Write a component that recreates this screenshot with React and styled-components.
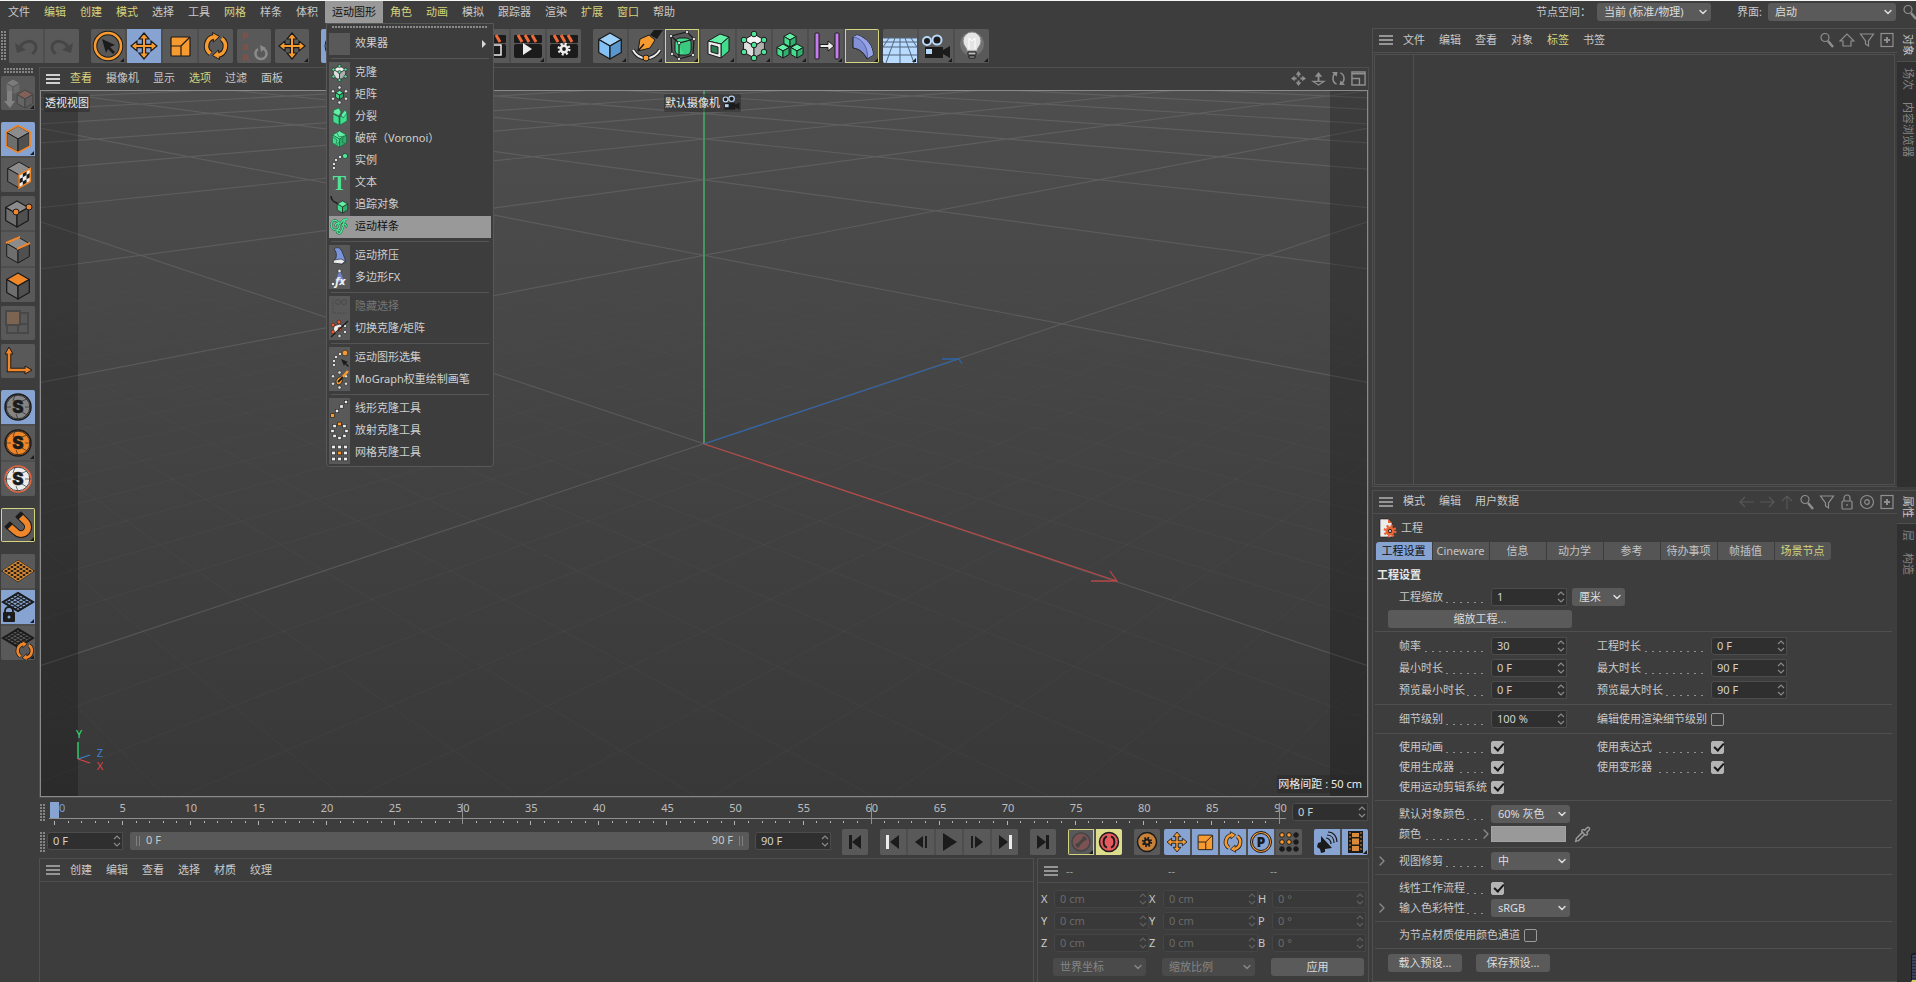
import React from 'react';
import styled, { createGlobalStyle, css } from 'styled-components';
import { ChevronDown, ChevronRight, Pipette } from 'lucide-react';

const c = {
  bg: '#3d3d3d',
  line: '#4f4f4f',
  button: '#595959',
  dark: '#1b1b1b',
  field: '#2f2f2f',
  text: '#c9c9c9',
  blue: '#86a3d2',
  yellow: '#d4d47e',
  orange: '#f79a2f',
  green: '#4ee598',
  white: '#ececec',
};

const GlobalStyle = createGlobalStyle`
  * {
    box-sizing: border-box;
  }
  body {
    margin: 0;
    background: ${c.bg};
    overflow: hidden;
  }
  body, button, input, select {
    font-family: 'Noto Sans', 'Noto Sans CJK SC', sans-serif;
    font-size: 11px;
    line-height: 16px;
    color: ${c.text};
  }
  button, input, select {
    margin: 0;
    padding: 0;
    border: 0;
    outline: 0;
    background: none;
  }
  svg {
    display: block;
    flex: none;
  }
`;

/* ---------- shell ---------- */

const Shell = styled.div`
  display: flex;
  flex-direction: column;
  height: 100vh;
  border-top: 1px solid #f4f7f4;
`;

const Main = styled.div`
  display: flex;
  flex: 1;
  min-height: 0;
`;

const Workspace = styled.div`
  display: flex;
  flex-direction: column;
  flex: 1;
  min-width: 0;
  padding-right: 3px;
`;

const WorkBody = styled.div`
  display: flex;
  flex: 1;
  min-height: 0;
`;

const Center = styled.div`
  display: flex;
  flex-direction: column;
  flex: 1;
  min-width: 0;
`;

const Sidebar = styled.aside`
  display: flex;
  flex-direction: column;
  width: 544px;
  padding-top: 5px;
`;

/* ---------- menus ---------- */

const MenuBar = styled.nav`
  display: flex;
  align-items: center;
  height: 22px;
  padding-left: 1px;
  flex: none;
`;

const MenuSlot = styled.div`
  position: relative;
`;

const MenuItem = styled.button`
  display: block;
  height: 22px;
  padding: 0 7px 1px;
  white-space: nowrap;
  color: ${p => (p.$open ? '#101010' : p.$hot ? c.yellow : c.text)};
  background: ${p => (p.$open ? '#999' : 'none')};
`;

const Spacer = styled.div`
  flex: 1;
`;

const BarLabel = styled.label`
  margin-left: ${p => p.$gap || 0}px;
  white-space: nowrap;
`;

const Popup = styled.div`
  position: absolute;
  z-index: 10;
  top: 22px;
  left: 1px;
  width: 168px;
  padding: 2px;
  background: ${c.bg};
  border: 1px solid #585858;
  border-radius: 0 0 4px 4px;
`;

const PopupGrip = styled.div`
  height: 4px;
  margin: 0 3px 3px;
  background: radial-gradient(circle at 1px 1px, #8a8a8a 0 1px, transparent 1px) 0 0 / 3px 4px;
`;

const PopupItem = styled.button`
  display: flex;
  align-items: center;
  width: 100%;
  height: 22px;
  text-align: left;
  white-space: nowrap;
  color: ${p => (p.$off ? '#757575' : p.$active ? '#101010' : '#d0d0d0')};
  background: ${p => (p.$active ? '#999' : 'none')};
`;

const PopupText = styled.span`
  flex: 1;
  padding: 0 5px 2px;
`;

const PopupIcon = styled.span`
  width: 21px;
  height: 22px;
  background: ${p => (p.$active ? 'none' : c.button)};
`;

const PopupRule = styled.hr`
  height: 1px;
  margin: 3px 2px;
  border: 0;
  background: #555;
`;

/* ---------- tools ---------- */

const ToolStrip = styled.div`
  display: flex;
  height: 44px;
  padding: 6px 0 0 1px;
  flex: none;
`;

const ToolColumn = styled.div`
  width: 39px;
  padding: 1px 0 0 1px;
  flex: none;
`;

const Grip = styled.div`
  flex: none;
  background: radial-gradient(circle at 1px 1px, #858585 0 1px, transparent 1px) 0 0 / 3px 3px;
  width: ${p => p.$w}px;
  height: ${p => p.$h}px;
  margin: ${p => p.$m || 0};
`;

const Group = styled.div`
  display: flex;
  flex: none;
  flex-direction: ${p => (p.$column ? 'column' : 'row')};
  gap: 2px;
  width: ${p => (p.$column ? '34px' : 'auto')};
  height: ${p => (p.$column ? 'auto' : 'max-content')};
  margin: ${p => (p.$column ? `${p.$gap}px 0 0` : `0 0 0 ${p.$gap}px`)};
  border-radius: 2px;
  background: #4e4e4e;
  overflow: hidden;
`;

const Tool = styled.button`
  position: relative;
  width: ${p => (p.$small ? 26 : 34)}px;
  height: ${p => (p.$small ? 26 : 34)}px;
  background: ${p => (p.$on ? c.blue : p.$record ? '#dcdc8c' : c.button)};
  ${p =>
    p.$ring &&
    css`
      box-shadow: inset 0 0 0 1px ${c.yellow};
    `}
  ${p =>
    p.$more &&
    css`
      &::after {
        content: '';
        position: absolute;
        right: 1px;
        bottom: 1px;
        border: 2px solid ${c.dark};
        border-top-color: transparent;
        border-left-color: transparent;
      }
    `}
`;

/* ---------- viewport ---------- */

const Panel = styled.section`
  display: flex;
  flex-direction: column;
  border: 1px solid ${c.line};
  min-height: 0;
`;

const ViewPanel = styled(Panel)`
  flex: 1;
`;

const PanelBar = styled.div`
  display: flex;
  align-items: center;
  height: ${p => p.$h || 22}px;
  padding: 0 ${p => p.$right || 0}px ${p => p.$lift || 0}px 6px;
  flex: none;
  border-bottom: ${p => (p.$line ? `1px solid ${c.line}` : 0)};
`;

const BurgerButton = styled.button`
  width: 14px;
  height: 10px;
  margin-right: 3px;
  flex: none;
  background: linear-gradient(
    ${p => p.$color || '#959595'} 2px,
    transparent 2px 4px,
    ${p => p.$color || '#959595'} 4px 6px,
    transparent 6px 8px,
    ${p => p.$color || '#959595'} 8px
  );
`;

const BarIcons = styled.div`
  display: flex;
  align-items: center;
  gap: ${p => p.$gap}px;
`;

const Scene = styled.div`
  position: relative;
  flex: 1;
  min-height: 0;
  border: 1px solid #8a8a8a;
  background: linear-gradient(#4e4e4e, #383838);
  overflow: hidden;
  > svg {
    width: 100%;
    height: 100%;
  }
`;

const SceneTag = styled.div`
  position: absolute;
  display: flex;
  align-items: center;
  height: 18px;
  padding: 0 1px;
  border-radius: 2px;
  color: #ececec;
  white-space: nowrap;
  background: rgba(40, 40, 40, 0.5);
`;

const TagLeft = styled(SceneTag)`
  top: 3px;
  left: 3px;
`;

const TagCamera = styled(SceneTag)`
  top: 3px;
  left: 50%;
  margin-left: -40px;
  gap: 2px;
`;

const TagGrid = styled(SceneTag)`
  right: 4px;
  bottom: 3px;
`;

/* ---------- timeline ---------- */

const TimeRow = styled.div`
  display: flex;
  height: ${p => p.$h}px;
  padding: 0 1px;
  flex: none;
`;

const Ruler = styled.div`
  position: relative;
  flex: 1;
  margin: 0 6px 0 4px;
  padding-top: 2px;
`;

const RulerLabels = styled.div`
  display: flex;
  justify-content: space-between;
  height: 19px;
  padding: 0 5px;
  border-bottom: 1px solid #8f8f8f;
  span {
    display: flex;
    justify-content: center;
    width: 1px;
    color: #bdbdbd;
  }
  span:first-child {
    justify-content: flex-start;
    text-indent: 5px;
    color: #7d9fdc;
  }
`;

const RulerTicks = styled.div`
  display: flex;
  justify-content: space-between;
  padding: 2px 5px 0;
`;

const Tick = styled.i`
  width: 1px;
  height: ${p => (p.$tall ? 21 : p.$mid ? 4 : 2)}px;
  margin-top: ${p => (p.$tall ? -18 : 0)}px;
  background: ${p => (p.$tall ? '#8f8f8f' : '#b5b5b5')};
`;

const Playhead = styled.i`
  position: absolute;
  top: 4px;
  left: 1px;
  width: 9px;
  height: 16px;
  background: ${c.blue};
`;

const RangeBar = styled.div`
  display: flex;
  flex: 1;
  justify-content: space-between;
  height: 18px;
  margin: 6px 6px 0 7px;
  padding: 0 6px;
  border-radius: 2px;
  background: #595959;
  span {
    height: 10px;
    margin-top: 4px;
    padding: 0 9px;
    line-height: 8px;
  }
  span:first-child {
    border-left: 1px solid #808080;
    box-shadow: inset 2px 0 #595959, inset 3px 0 #808080;
  }
  span:last-child {
    border-right: 1px solid #808080;
    box-shadow: inset -2px 0 #595959, inset -3px 0 #808080;
  }
`;

const Transport = styled.div`
  display: flex;
  margin: 3px 0 0 -1px;
`;

/* ---------- form parts ---------- */

const FieldBox = styled.span`
  position: relative;
  display: flex;
  width: ${p => (p.$w ? `${p.$w}px` : 'auto')};
  flex: ${p => (p.$w ? 'none' : 1)};
  min-width: 0;
  height: 18px;
  margin: ${p => p.$m || 0};
  border: 1px solid ${p => (p.$off ? '#454545' : '#4c4c4c')};
  border-radius: 3px 0 0 3px;
  background: ${p => (p.$off ? '#393939' : c.field)};
  input {
    width: 100%;
    padding: 0 14px 1px 5px;
    color: ${p => (p.$off ? '#6a6a6a' : '#d2d2d2')};
  }
`;

const Spin = styled.svg`
  position: absolute;
  top: 2px;
  right: 1px;
  fill: none;
  stroke: ${p => (p.$off ? '#606060' : '#8a8a8a')};
`;

const SelectBox = styled.span`
  position: relative;
  display: flex;
  width: ${p => (p.$w ? `${p.$w}px` : 'auto')};
  flex: ${p => (p.$w ? 'none' : 1)};
  min-width: 0;
  height: 18px;
  margin-left: ${p => p.$gap || 0}px;
  border-radius: 3px;
  background: ${p => (p.$off ? '#4a4a4a' : '#5a5a5a')};
  color: ${p => (p.$off ? '#858585' : '#dcdcdc')};
  select {
    appearance: none;
    width: 100%;
    padding: 0 14px 1px 7px;
    color: inherit;
    opacity: 1;
  }
  svg {
    position: absolute;
    top: 3px;
    right: 2px;
    pointer-events: none;
  }
`;

const PushButton = styled.button`
  width: ${p => (p.$w ? `${p.$w}px` : 'auto')};
  flex: ${p => (p.$w ? 'none' : 1)};
  height: 18px;
  padding-bottom: 1px;
  border-radius: 3px;
  background: #5a5a5a;
  color: #dcdcdc;
`;

const Check = styled.input.attrs({ type: 'checkbox' })`
  appearance: none;
  position: relative;
  width: 13px;
  height: 13px;
  flex: none;
  border: 1px solid #9a9a9a;
  border-radius: 2px;
  &:checked {
    background: #b4b4b4;
    border-color: #b4b4b4;
  }
  &:checked::after {
    content: '';
    position: absolute;
    top: 1px;
    left: 2px;
    width: 8px;
    height: 4px;
    border: solid #161616;
    border-width: 0 0 2px 2px;
    transform: rotate(-48deg);
  }
`;

/* ---------- bottom panels ---------- */

const BottomRow = styled.div`
  display: flex;
  gap: 3px;
  height: 124px;
  flex: none;
`;

const Materials = styled(Panel)`
  flex: 1;
  border-bottom: 0;
`;

const Coords = styled(Panel)`
  width: 332px;
  border-bottom: 0;
`;

const CoordHeads = styled.div`
  display: grid;
  grid-template-columns: repeat(3, 102px);
  color: #9a9a9a;
  padding-left: 5px;
`;

const CoordGrid = styled.div`
  display: grid;
  grid-template-columns: 13px 95px 14px 95px 14px 94px;
  grid-auto-rows: 22px;
  align-items: center;
  padding: 5px 0 0 3px;
`;

const CoordFoot = styled.div`
  display: grid;
  grid-template-columns: 93px 93px 93px;
  gap: 16px;
  padding: 4px 0 0 15px;
`;

/* ---------- right side ---------- */

const Dock = styled.div`
  display: flex;
  min-height: 0;
  flex: ${p => (p.$grow ? 1 : 'none')};
  height: ${p => (p.$h ? `${p.$h}px` : 'auto')};
`;

const DockGap = styled.div`
  height: 3px;
`;

const DockPanel = styled(Panel)`
  flex: 1;
  border-right: 0;
`;

const DockTabs = styled.div`
  display: flex;
  flex-direction: column;
  width: 19px;
  background: #303030;
`;

const DockTab = styled.button`
  padding: ${p => (p.$on ? '5px 0 5px 3px' : '6px 0 6px 3px')};
  writing-mode: vertical-rl;
  text-orientation: sideways;
  text-align: left;
  line-height: 16px;
  color: ${p => (p.$on ? '#c4c4c4' : '#858585')};
  background: ${p => (p.$on ? c.bg : 'none')};
  border-top: ${p => (p.$on ? `1px solid ${c.line}` : 0)};
  border-bottom: ${p => (p.$on ? `1px solid ${c.line}` : 0)};
`;

const ObjectArea = styled.div`
  flex: 1;
  margin: 1px 2px 1px 1px;
  border: 1px solid ${c.line};
  background: linear-gradient(${c.line}, ${c.line}) 38px 0 / 1px 100% no-repeat;
`;

const ObjectTitle = styled.div`
  display: flex;
  align-items: center;
  gap: 4px;
  height: 28px;
  padding: 0 0 1px 6px;
`;

const TabRow = styled.div`
  display: flex;
  gap: 1px;
  margin-left: 3px;
`;

const Tab = styled.button`
  width: 56px;
  height: 18px;
  padding: 0 1px 1px 0;
  white-space: nowrap;
  background: ${p => (p.$on ? c.blue : '#555')};
  color: ${p => (p.$on ? '#101010' : p.$hot ? c.yellow : '#c4c4c4')};
  &:first-child {
    border-radius: 3px 0 0 0;
  }
  &:last-child {
    border-radius: 0 3px 3px 0;
  }
`;

const SectionTitle = styled.h2`
  height: 22px;
  margin: 4px 0 0 4px;
  font-size: 11px;
  font-weight: 700;
  line-height: 21px;
  color: #e6e6e6;
`;

const Section = styled.div`
  margin: 0 5px 0 2px;
  padding: ${p => (p.$flush ? '0 0 1px' : '3px 0')};
  border-top: ${p => (p.$flush ? 0 : `1px solid ${c.line}`)};
`;

const Row = styled.div`
  display: flex;
  align-items: center;
  height: ${p => p.$h || 20}px;
  padding-left: ${p => (p.$outer ? 13 : 24)}px;
`;

const Fold = styled(ChevronRight).attrs({ size: 16, strokeWidth: 2 })`
  margin: 0 ${p => (p.$inner ? -3 : 9)}px 0 ${p => (p.$inner ? -7 : -25)}px;
  color: #8a8a8a;
`;

const Pair = styled.div`
  display: flex;
  align-items: center;
  width: 198px;
`;

const Caption = styled.label`
  display: flex;
  width: ${p => p.$w || 84}px;
  margin-right: 8px;
  white-space: nowrap;
  flex: none;
  &::after {
    content: '';
    flex: 1;
    margin-left: 2px;
    height: 14px;
    background: repeating-linear-gradient(to left, #909090 0 2px, transparent 2px 7px) right bottom / 100% 1px no-repeat;
  }
`;

const PlainCaption = styled.label`
  margin-right: 4px;
  white-space: nowrap;
`;

const Swatch = styled.button`
  width: 75px;
  height: 16px;
  background: #999;
  border: 1px solid #a3a3a3;
`;

const TwoButtons = styled.div`
  display: flex;
  gap: 14px;
  padding: 2px 0 0 13px;
`;

const Gadget = styled.i`
  position: fixed;
  right: 0;
  bottom: 0;
  width: 5px;
  height: 29px;
  border: 1px solid #15171f;
  border-right: 0;
  border-radius: 3px 0 0 0;
  background: repeating-linear-gradient(#262b3d 0 1px, #3b425a 1px 3px);
  border-bottom: 2px solid #d8d060;
`;

/* ---------- drawings ---------- */

const greens = ['#63efa6', '#41dd8d', '#2fae6c'];
const greys = ['#8c8c8c', '#6e6e6e', '#505050'];
const whites = ['#f4f4f4', '#dedede', '#b0b0b0'];

function Cube({ x, y, r, fill = greens, line = c.dark, w = 1 }) {
  const k = r * 0.87;
  const h = r / 2;
  return (
    <g stroke={line} strokeWidth={w} strokeLinejoin="round">
      <path d={`M${x} ${y - r}l${k} ${h}l${-k} ${h}l${-k} ${-h}z`} fill={fill[0]} />
      <path d={`M${x - k} ${y - h}l${k} ${h}v${r}l${-k} ${-h}z`} fill={fill[1]} />
      <path d={`M${x + k} ${y - h}l${-k} ${h}v${r}l${k} ${-h}z`} fill={fill[2]} />
    </g>
  );
}

function Dots({ at, r = 2, fill = c.green, line = c.dark, w = 1 }) {
  return at.map(([x, y], i) => <circle key={i} cx={x} cy={y} r={r} fill={fill} stroke={line} strokeWidth={w} />);
}

function Squares({ at, s = 3, fill = c.white }) {
  return at.map(([x, y], i) => (
    <rect key={i} x={x - s / 2} y={y - s / 2} width={s} height={s} fill={fill} stroke={c.dark} strokeWidth=".6" />
  ));
}

function ring(cx, cy, r, n = 6, from = -90) {
  return Array.from({ length: n }, (_, i) => {
    const a = ((from + (i * 360) / n) * Math.PI) / 180;
    return [cx + r * Math.cos(a), cy + r * Math.sin(a)];
  });
}

function Gear({ x, y, r, color = c.white, hole = c.dark }) {
  const round = 2 * Math.PI * r;
  return (
    <g fill="none">
      <circle cx={x} cy={y} r={r} stroke={color} strokeWidth={r * 0.6} strokeDasharray={`${round / 16} ${round / 16}`} />
      <circle cx={x} cy={y} r={r * 0.9} fill={color} />
      <circle cx={x} cy={y} r={r * 0.38} fill={hole} />
    </g>
  );
}

const moveD = 'M17 4l5 6h-3.400v5.400H24V12l6 5-6 5v-3.400h-5.400V24H22l-5 6-5-6h3.400v-5.400H10V22l-6-5 6-5v3.400h5.400V10H12z';

const Move = () => <path d={moveD} fill={c.orange} stroke={c.dark} strokeWidth="1.200" />;

const Scale = () => (
  <g stroke={c.dark} strokeWidth="1.200">
    <rect x="8" y="8" width="19" height="19" rx="1" fill={c.orange} />
    <path d="M8 17h10v10M18 17l9-9" fill="none" />
  </g>
);

const Rotate = ({ color = c.orange }) => (
  <g fill="none" strokeLinecap="butt">
    <path d="M11.500 24.500A9.300 9.300 0 0 1 15 7.800M22.500 9.500A9.300 9.300 0 0 1 19 26.200" stroke={c.dark} strokeWidth="5.500" />
    <path d="M13.500 3.500l7 4-6 5.500zM20.500 30.500l-7-4 6-5.500z" fill={color} stroke={c.dark} />
    <path d="M11.500 24.500A9.300 9.300 0 0 1 15 7.800M22.500 9.500A9.300 9.300 0 0 1 19 26.200" stroke={color} strokeWidth="3.500" />
  </g>
);

const Undo = ({ flip }) => (
  <g transform={flip ? 'matrix(-1 0 0 1 34 0)' : undefined}>
    <path d="M11 21c-1-9 16-13 16-2 0 3-2 4-3.500 6" fill="none" stroke="#464646" strokeWidth="3" />
    <path d="M6 14l2 10 9-3z" fill="#464646" />
  </g>
);

const Clapper = ({ children }) => (
  <g>
    <rect x="3" y="15" width="28" height="14" rx="2" fill={c.dark} />
    <rect x="3" y="6" width="28" height="8" rx="1" fill={c.dark} />
    <path d="M7 6l4 7M14 6l4 7M21 6l4 7" stroke="#ee6a3a" strokeWidth="3" />
    {children}
  </g>
);

const Camera = () => (
  <g>
    <path d="M6 18h18v11H6zM24 21l7-4v12l-7-4z" fill={c.dark} />
    <circle cx="8" cy="12" r="4" fill={c.dark} stroke="#b9d7f7" strokeWidth="2" />
    <circle cx="18" cy="11" r="4.500" fill={c.dark} stroke="#b9d7f7" strokeWidth="2" />
    <rect x="7" y="20" width="6" height="5" fill="#b9d7f7" />
  </g>
);

const Net = ({ y = 17, color = '#d98a34', h = 10, under = c.dark }) => (
  <g fill="none" stroke={color}>
    <path d={`M2 ${y}L17 ${y - h}L32 ${y}L17 ${y + h}z`} stroke={c.dark} strokeWidth="2" fill={under} />
    {[0, 1, 2, 3, 4, 5].map(i => (
      <path
        key={i}
        strokeWidth="1.100"
        d={`M${2 + i * 3} ${y - i * (h / 5)}l15 ${h}M${2 + i * 3} ${y + i * (h / 5)}l15 ${-h}`}
      />
    ))}
  </g>
);

const Snap = ({ fill, edge = c.dark }) => (
  <g>
    <circle cx="17" cy="17" r="13" fill={fill} stroke={edge} strokeWidth="1.500" />
    <path d="M4 17h6M24 17h6M14 5l-2 6M17 29l-2-5M26 9l-5 2M26 25l-5-3" stroke={c.dark} strokeWidth=".6" />
    <circle cx="17" cy="17" r="11.800" fill="none" stroke={c.dark} strokeWidth=".8" />
    <text x="17" y="23" textAnchor="middle" fontFamily="Inter" fontSize="17" fontWeight="900" fill={c.dark} stroke={c.dark} strokeWidth=".4">S</text>
  </g>
);

const art = {
  undo: <Undo />,
  redo: <Undo flip />,
  select: (
    <g>
      <circle cx="17" cy="17" r="13" fill="none" stroke={c.dark} strokeWidth="4.500" />
      <circle cx="17" cy="17" r="13" fill="none" stroke={c.orange} strokeWidth="2.600" />
      <path d="M11 10l13 6-5 2 5 5-2 2-5-5-2 4z" fill={c.dark} />
    </g>
  ),
  move: <Move />,
  scale: <Scale />,
  rotate: <Rotate />,
  psr: (
    <g>
      <g fill="#7f5148" stroke="#7f5148" strokeWidth=".6" fontFamily="Liberation Sans" fontSize="9" fontWeight="700">
        <text x="5" y="10">P</text>
        <text x="5" y="21">S</text>
        <text x="5" y="32">R</text>
      </g>
      <path d="M21 20a5.500 5.500 0 1 0 6 0" fill="none" stroke="#8a8a8a" strokeWidth="2.500" />
      <path d="M23 16l6 3-5 4z" fill="#8a8a8a" />
    </g>
  ),
  axisX: <circle cx="17" cy="17" r="13" fill={c.orange} stroke={c.dark} />,
  world: <Cube x={17} y={17} r={12} fill={greys} />,
  clap: (
    <Clapper>
      <rect x="10" y="16" width="16" height="10" fill="none" stroke={c.white} strokeWidth="1.500" />
    </Clapper>
  ),
  clapPlay: (
    <Clapper>
      <path d="M12 14v12l9-6z" fill={c.white} />
    </Clapper>
  ),
  clapGear: (
    <Clapper>
      <Gear x={17} y={20} r={5} />
    </Clapper>
  ),
  cube: <Cube x={17} y={17} r={13} fill={['#9fd2fb', '#83c0f5', '#5b97cf']} w={1.3} />,
  pen: (
    <g>
      <path d="M21 6l4-5h9l-6 9z" fill={c.dark} />
      <path d="M9 22l2-12 9-4 6 5-5 8z" fill={c.orange} stroke={c.dark} />
      <path d="M9 22l6-7" stroke={c.dark} strokeWidth="1.500" />
      <path d="M4 21c6 11 20 11 27 0" fill="none" stroke={c.dark} strokeWidth="4" />
      <path d="M4 21c6 11 20 11 27 0" fill="none" stroke={c.white} strokeWidth="2" />
      <Dots at={[[17, 29]]} r={3} fill={c.orange} />
    </g>
  ),
  subdiv: (
    <g>
      <rect x="10" y="9" width="16" height="17" rx="5" fill={greens[1]} stroke={c.dark} />
      <path d="M12 14l9-2 5 1-1 10-5 3z" fill={greens[2]} opacity=".4" />
      <path d="M6 7l16-4 7 7-15 4zM6 7l1 18 7 5V14M29 10l-1 16-14 4" fill="none" stroke={c.dark} strokeWidth="1.200" />
      <Squares at={[[6, 7], [22, 3], [29, 10], [14, 14], [7, 25], [14, 30], [28, 26]]} s={2.5} />
    </g>
  ),
  extrude: (
    <g stroke={c.dark} strokeLinejoin="round">
      <path d="M7 12l12-7 9 3-8 7z" fill={greens[0]} />
      <path d="M28 8v14l-8 7V15z" fill={greens[1]} />
      <path d="M7 12l13 3v14L7 25z" fill={c.white} />
      <path d="M10 16l7 2v7l-7-2z" fill="#2a8052" />
    </g>
  ),
  cloner: (
    <g>
      <Cube x={17} y={17} r={12} fill={whites} />
      <Dots at={[[17, 5], [27, 11], [27, 23], [17, 29], [7, 23], [7, 11], [17, 16]]} r={2.8} />
    </g>
  ),
  fracture: (
    <g>
      <Cube x={17} y={11} r={7} />
      <Cube x={10} y={22} r={7} />
      <Cube x={24} y={22} r={7} />
    </g>
  ),
  spread: (
    <g>
      <rect x="6" y="4" width="4" height="26" rx="1" fill="#c77df0" stroke={c.dark} />
      <rect x="26" y="4" width="4" height="26" rx="1" fill="#c77df0" stroke={c.dark} />
      <path d="M11 15.500h8V12l6 5-6 5v-3.500h-8z" fill={c.white} stroke={c.dark} />
    </g>
  ),
  bend: (
    <g strokeLinejoin="round">
      <path d="M8 8l4-2c10 3 16 11 16 20l-6 4C19 24 15 20 8 19z" fill="#8290d8" stroke={c.dark} />
      <path d="M8 8l4-2c10 3 16 11 16 20l-5 3C23 18 17 9 8 8z" fill="#95a3e8" />
      <path d="M8 8c9 1 15 10 14.500 21.500" fill="none" stroke="#4a5590" strokeWidth=".8" />
    </g>
  ),
  floor: (
    <g>
      <path d="M0 9h34v25H0z" fill="#b9dbff" />
      <path d="M0 9h34M0 13h34M0 18h34M0 26h34M17 9v25M12 9L3 34M22 9l9 25M6 9L0 18M28 9l6 9" stroke="#50657c" fill="none" />
    </g>
  ),
  camera: <Camera />,
  light: (
    <g>
      <circle cx="17" cy="15" r="12" fill="#fff" opacity=".15" />
      <path d="M12 22c0-4-4-5-4-10a9 9 0 0 1 18 0c0 5-4 6-4 10z" fill="#e4e4e4" stroke="#8a8a8a" />
      <path d="M13 23h8v3h-8zM14 27h6v2h-6z" fill="#bdbdbd" stroke={c.dark} />
      <path d="M14 20V9l3 3 3-3v11" stroke="#fff" fill="none" />
    </g>
  ),
  makeEdit: (
    <g opacity=".55">
      <Cube x={12} y={11} r={8} fill={['#999', '#8a8a8a', '#787878']} line="#5a5a5a" />
      <Cube x={24} y={23} r={9} fill={['#a86858', '#707070', '#626262']} line="#333" />
      <path d="M6 15h5v10h3l-5 7-6-7h3z" fill="#a5a5a5" />
    </g>
  ),
  model: (
    <g>
      <Cube x={17} y={17} r={13} fill={greys} />
      <path d="M17 3.500l12 6.500v14l-12 6.500L5 24V10z" fill="none" stroke="#f0862a" strokeWidth="1.800" />
    </g>
  ),
  texture: (
    <g>
      <Cube x={18} y={17} r={13} fill={greys} />
      <g transform="matrix(3.77 -2.17 0 4.33 18 17)">
        <path d="M0 0h3v3H0z" fill={c.white} />
        <path d="M1 0h1v1H1zM0 1h1v1H0zM2 1h1v1H2zM1 2h1v1H1z" fill={c.dark} />
      </g>
      <path d="M18 17l11.300-6.500v13L18 30z" fill="none" stroke="#f0862a" strokeWidth="1.500" />
    </g>
  ),
  points: (
    <g>
      <Cube x={16} y={18} r={13} fill={greys} w={1.3} />
      <Dots at={[[15, 16], [28, 11]]} r={3} fill="#f0862a" />
    </g>
  ),
  edges: (
    <g>
      <Cube x={17} y={18} r={13} fill={greys} />
      <path d="M5 11l14-6M16 17l13-6" stroke="#f0862a" strokeWidth="2.200" />
    </g>
  ),
  faces: <Cube x={17} y={18} r={13} fill={['#f0862a', greys[1], greys[2]]} w={1.3} />,
  uv: (
    <g fill="none" stroke="#484848" strokeWidth="2">
      <path d="M6 18v9h21V7h-8M17 18v9M6 18h21" />
      <rect x="5" y="5" width="14" height="14" fill="#7d6451" />
    </g>
  ),
  axis: (
    <g>
      <path d="M8 8v18h18" fill="none" stroke={c.dark} strokeWidth="4.500" />
      <path d="M8 3l4 7H4zM31 26l-7 4v-8z" fill="#f0862a" stroke={c.dark} />
      <path d="M8 8v18h18" fill="none" stroke="#f0862a" strokeWidth="2.500" />
    </g>
  ),
  snapGrey: <Snap fill="#858585" />,
  snapOrange: <Snap fill="#f0862a" />,
  snapWhite: <Snap fill={c.white} edge="#e4603a" />,
  magnet: (
    <g fill="none">
      <path d="M18 7l7 7a7 7 0 0 1-10 10l-8-7" stroke={c.dark} strokeWidth="8" />
      <path d="M18 7l7 7a7 7 0 0 1-10 10l-8-7" stroke="#f0862a" strokeWidth="6" />
      <path d="M17 6l3 3M6 16l3 3" stroke={c.dark} strokeWidth="8" />
    </g>
  ),
  netOrange: <Net />,
  netLock: (
    <g>
      <Net y={12} h={9} color={c.dark} under="none" />
      <path d="M4 23v-2a4 4 0 0 1 8 0v2" fill="none" stroke={c.dark} strokeWidth="1.800" />
      <rect x="2" y="22" width="12" height="10" rx="1" fill={c.dark} />
      <circle cx="8" cy="27" r="1.500" fill={c.blue} />
    </g>
  ),
  netRotate: (
    <g>
      <Net y={12} h={9} color={c.dark} under="none" />
      <g transform="translate(11 12) scale(.75)">
        <Rotate color="#f0862a" />
      </g>
    </g>
  ),
};

/* transport and keyframe buttons, 26px */
const small = {
  first: <path d="M7 6h3v14H7zM19 6v14l-9-7z" />,
  prevKey: (
    <g>
      <path d="M6 6h3v14H6z" fill={c.white} />
      <path d="M19 6v14l-9-7z" />
    </g>
  ),
  prev: <path d="M15 7v12l-8-6zM17 7h2v12h-2z" />,
  play: <path d="M7 4v18l14-9z" />,
  next: <path d="M11 7v12l8-6zM7 7h2v12H7z" />,
  nextKey: (
    <g>
      <path d="M17 6h3v14h-3z" fill={c.white} />
      <path d="M7 6v14l9-7z" />
    </g>
  ),
  last: <path d="M16 6h3v14h-3zM7 6v14l9-7z" />,
  key: (
    <g>
      <circle cx="13" cy="13" r="9" fill="#7c5252" stroke="#454545" strokeWidth="1.500" />
      <path d="M9 17l8-8M8 15l3 3M15 8l3 3" stroke="#444" strokeWidth="3" />
    </g>
  ),
  record: (
    <g>
      <circle cx="13" cy="13" r="9.500" fill="#e65a5e" stroke={c.dark} strokeWidth="1.500" />
      <path d="M11 7.500C6.500 9 6.500 17 11 18.500M15 7.500c4.500 1.500 4.500 9.500 0 11" fill="none" stroke={c.dark} strokeWidth="2" />
    </g>
  ),
  gear: (
    <g>
      <circle cx="13" cy="13" r="9.500" fill="#c98138" stroke={c.dark} strokeWidth="1.500" />
      <Gear x={13} y={13} r={4} color={c.dark} hole="#c98138" />
    </g>
  ),
  param: (
    <g>
      <circle cx="13" cy="13" r="10.500" fill={c.orange} stroke={c.dark} />
      <circle cx="13" cy="13" r="8.500" fill={c.blue} stroke={c.dark} />
      <text x="13" y="18" textAnchor="middle" fontSize="14" fontWeight="900">P</text>
    </g>
  ),
  pla: (
    <g>
      <Dots at={[[6, 6], [13, 6], [6, 13], [13, 13]]} r={2.3} fill={c.orange} />
      <Dots at={[[20, 6], [20, 13], [6, 20], [13, 20], [20, 20]]} r={2.3} fill={c.dark} />
    </g>
  ),
  sound: (
    <g>
      <path d="M7 7l11 12-7 1v3l-4 1-1-4-3-2 1-4 3-1z" />
      <path d="M12 9c3 0 5 3 5 6M13 6c5 0 7 4 7 8M14 3c6 0 9 5 9 10" fill="none" stroke={c.dark} strokeWidth="1.200" />
    </g>
  ),
  film: (
    <g>
      <path d="M6 2h15v22H6z" />
      <path d="M10 4h7v4h-7zM10 9.500h7v6h-7zM10 17h7v5h-7z" fill="#d9893a" />
      <path d="M8 3v20M19 3v20" stroke="#d9893a" strokeDasharray="2 2" />
    </g>
  ),
};

const whiteDots = { r: 1.7, fill: '#ddd', w: 0.6 };
const arc = [[5, 18], [5, 14], [7, 10], [11, 7]];

/* menu icons, 21 x 22 */
const menuArt = {
  blank: null,
  cloner: (
    <g>
      <Cube x={10.5} y={11} r={7} fill={whites} w={0.6} />
      <Dots at={[...ring(10.500, 11, 7), [10.500, 10]]} r={1.6} w={0.6} />
    </g>
  ),
  matrix: (
    <g>
      <Cube x={10.5} y={11} r={4.5} w={0.7} />
      <Dots at={ring(10.500, 11, 7.500)} {...whiteDots} />
    </g>
  ),
  fracture: (
    <g stroke="#185f3a" strokeWidth=".6" strokeLinejoin="round">
      <path d="M4 8l6 3v8l-6-3z" fill={greens[1]} />
      <path d="M11 11l7-4v8l-7 4z" fill={greens[1]} />
      <path d="M5 4l5-2 2 4-2 4-6-3z" fill={greens[0]} />
      <path d="M12 9l4-5 2 3-4 5z" fill={greens[0]} />
    </g>
  ),
  voronoi: (
    <g>
      <Cube x={10.5} y={11} r={8} w={0.6} line="#185f3a" />
      <path d="M4 9l4 3-1 4M8 5l2 4 5-1M14 10l-1 4 4 2M10 14l-2 3" fill="none" stroke="#1d6b43" strokeWidth=".7" />
    </g>
  ),
  instance: (
    <g>
      <Dots at={arc} {...whiteDots} />
      <Dots at={[[16, 6]]} r={2.6} w={0.6} />
    </g>
  ),
  text: (
    <text x="10.5" y="18" textAnchor="middle" fontFamily="Liberation Serif" fontWeight="700" fontSize="20" fill={c.green}>
      T
    </text>
  ),
  tracer: (
    <g>
      <path d="M2 2c0 4 2 6 8 8" fill="none" stroke={c.dark} strokeWidth="1.500" />
      <Cube x={13.5} y={13} r={6} w={0.6} />
    </g>
  ),
  spline: (
    <g fill="none" strokeLinecap="round">
      <path d="M8 5C2 2 1 11 4 13s8 0 6-4-5 1-3 1M9 6c4 4 2-3 9-3-4 1-3 5-4 8s-2 8-5 6 1-4 2-2M13 9c3-2 5 0 4 2" stroke="#185f3a" strokeWidth="2.200" />
      <path d="M8 5C2 2 1 11 4 13s8 0 6-4-5 1-3 1M9 6c4 4 2-3 9-3-4 1-3 5-4 8s-2 8-5 6 1-4 2-2M13 9c3-2 5 0 4 2" stroke={c.green} strokeWidth="1.400" />
    </g>
  ),
  moextrude: (
    <g stroke={c.dark} strokeWidth=".6">
      <path d="M5 4c4-3 7-1 9 5l3 8-4 2-8-2 2-4c1-4 0-7-2-9z" fill="#7a93dd" />
      <path d="M5 15l7-1 4 2-3 3-9-1z" fill={c.white} />
    </g>
  ),
  polyfx: (
    <g>
      <path d="M10.500 3l5 12h-9z" fill="#6f86cf" />
      <Dots at={[[10.500, 4], [4, 17]]} r={1.7} fill={c.white} w={0.5} />
      <text x="6" y="18" fontSize="11" fontStyle="italic" fontWeight="800" fill={c.white}>fx</text>
    </g>
  ),
  hide: (
    <g fill="none" stroke="#4a4a4a">
      <path d="M4 3v14h14" strokeDasharray="2 1" />
      <circle cx="9" cy="6" r="2.500" />
      <circle cx="15" cy="6" r="2.500" />
    </g>
  ),
  swap: (
    <g>
      <Dots at={[[16, 8], [16, 14], [10.500, 18]]} {...whiteDots} />
      <path d="M5 8l6-2 3 3-7 7-3-2z" fill={c.white} stroke={c.dark} strokeWidth=".6" />
      <Dots at={[[10, 4], [4, 7], [4, 14], [11, 11]]} r={1.9} fill="#ea5a32" w={0.5} />
      <path d="M2 19L19 3" stroke={c.dark} strokeWidth="1.200" />
    </g>
  ),
  moselect: (
    <g>
      <Dots at={arc} {...whiteDots} />
      <Dots at={[[16, 6]]} r={2.8} fill={c.orange} w={0.6} />
      <path d="M12 12l7 3-2 1 3 3-1 1-3-3-1 2z" fill={c.dark} />
    </g>
  ),
  weight: (
    <g>
      <Dots at={ring(10.500, 11, 7.500)} {...whiteDots} />
      <path d="M7 13c0-4 4-6 7-5l-1 5c-2 4-6 3-6 0z" fill={c.orange} stroke={c.dark} strokeWidth=".8" />
      <path d="M11 11l8-9" stroke={c.orange} strokeWidth="2.500" />
      <path d="M9 13l5-5" stroke={c.dark} strokeWidth="2" />
    </g>
  ),
  linear: (
    <g>
      <Squares at={[[8, 13], [12.500, 8.500], [17, 4]]} s={3.4} />
      <Squares at={[[3.500, 17.500]]} fill={c.orange} s={3.6} />
    </g>
  ),
  radial: (
    <g>
      <Squares at={ring(10.500, 11, 7, 8).slice(1)} s={3.4} />
      <Squares at={[[10.500, 4]]} fill={c.orange} s={3.6} />
    </g>
  ),
  grid: (
    <g>
      <Squares s={3.6} at={[[4.500, 5], [10.500, 5], [16.500, 5], [4.500, 11], [16.500, 11], [4.500, 17], [10.500, 17], [16.500, 17]]} />
      <Squares at={[[10.500, 11]]} fill={c.orange} s={3.6} />
    </g>
  ),
};

/* thin header icons, 16px */
const lineArt = {
  search: (
    <g>
      <circle cx="6" cy="5.500" r="4" />
      <path d="M9 9l5 6" strokeWidth="2.500" />
    </g>
  ),
  home: <path d="M1 9l7-7 7 7h-3v5H4V9z" />,
  filter: <path d="M1.500 2h13L9.500 9v5l-3-2V9z" />,
  plus: (
    <g>
      <rect x="2" y="1.500" width="12" height="13" />
      <path d="M8 5v6M5 8h6" strokeWidth="2" />
    </g>
  ),
  lock: (
    <g>
      <rect x="3" y="7" width="10" height="8" rx="1" />
      <path d="M5 7V4a3 3 0 0 1 6 0v3M8 10v2" />
    </g>
  ),
  target: (
    <g>
      <circle cx="8" cy="8" r="6.500" />
      <circle cx="8" cy="8" r="2.300" />
    </g>
  ),
  back: <path d="M15 8H1M6 3L1 8l5 5" />,
  forward: <path d="M1 8h14M10 3l5 5-5 5" />,
  up: <path d="M8 15V2M3 7l5-5 5 5" />,
  pan: (
    <path
      d="M8 0l3 4H9v2H7V4H5zM8 16l3-4H9v-2H7v2H5zM0 8l4-3v2h2v2H4v2zM16 8l-4-3v2h-2v2h2v2z"
      fill="currentColor"
      stroke="none"
    />
  ),
  dolly: (
    <g>
      <path d="M8 1l4 5H9v5H7V6H4z" fill="currentColor" stroke="none" />
      <path d="M2 11h12l-6 4z" />
    </g>
  ),
  orbit: (
    <g>
      <path d="M6 14C1 12 1 5 5 2M10 2c5 2 5 9 1 12" strokeWidth="1.600" />
      <path d="M1 1h6l-1 5zM15 15H9l1-5z" fill="currentColor" stroke="none" />
    </g>
  ),
  layout: <path d="M1 1h14v14H1zM1 3h14M1 8h8v7" strokeWidth="1.500" />,
};

function LineIcon({ name, size = 16, color = '#8f8f8f' }) {
  return (
    <svg width={size} height={size} viewBox="0 0 16 16" fill="none" stroke="currentColor" strokeWidth="1.200" color={color}>
      {lineArt[name]}
    </svg>
  );
}

/* ---------- perspective floor ---------- */

const HORIZON = 2.8;
const DEPTH = 0.746;
const DROP = 440.9;
const SPREAD = 491.6;

function project(i, j) {
  const d = 1 + (DEPTH * (i + j)) / 2;
  return [((i - j) * SPREAD) / d, HORIZON + DROP / d];
}

function floorLines(step, from, to, reach) {
  const out = [];
  for (let n = from; n <= to; n++) {
    const v = n * step;
    const near = -2.2 - v;
    const [ax, ay] = project(v, near);
    const [bx, by] = project(v, reach);
    out.push(`M${ax.toFixed(1)} ${ay.toFixed(1)}L${bx.toFixed(1)} ${by.toFixed(1)}`);
    out.push(`M${(-ax).toFixed(1)} ${ay.toFixed(1)}L${(-bx).toFixed(1)} ${by.toFixed(1)}`);
  }
  return out.join('');
}

function Floor() {
  return (
    <svg viewBox="-663 91 1326 705" preserveAspectRatio="xMidYMid slice">
      <defs>
        <linearGradient id="fade" x1="0" y1="91" x2="0" y2="796" gradientUnits="userSpaceOnUse">
          <stop offset="0.1" stopColor="#000" />
          <stop offset="0.6" stopColor="#fff" />
        </linearGradient>
        <mask id="near" maskUnits="userSpaceOnUse" x="-663" y="91" width="1326" height="705">
          <rect x="-663" y="91" width="1326" height="705" fill="url(#fade)" />
        </mask>
      </defs>
      <path d={floorLines(0.1, -20, 30, 6)} stroke="#fff" strokeOpacity=".03" mask="url(#near)" />
      <path d={floorLines(1, -3, 12, 14)} stroke="#fff" strokeOpacity=".1" strokeWidth="1.200" />
      <rect x="-663" y="91" width="37" height="705" fill="#000" opacity=".22" />
      <rect x="626" y="91" width="37" height="705" fill="#000" opacity=".22" />
      <g fill="none">
        <path d="M0 444V91" stroke="#489562" strokeWidth="2" />
        <path d="M0 444L255 359M238 359h17l3 5" stroke="#2f64a8" strokeWidth="1.300" />
        <path d="M0 444L413 581M387 581h26l-7-10" stroke="#b54848" strokeWidth="1.300" />
        <path d="M-626 759v-17" stroke="#2fe070" strokeWidth="1.300" />
        <path d="M-626 759l12-4" stroke="#3a80d8" strokeWidth="1.300" />
        <path d="M-626 759l12 4" stroke="#dd4444" strokeWidth="1.300" />
      </g>
      <g fontSize="11" textAnchor="middle">
        <text x="-625" y="738" fill="#2fe070">Y</text>
        <text x="-604" y="757" fill="#3a80d8">Z</text>
        <text x="-604" y="770" fill="#dd4444">X</text>
      </g>
    </svg>
  );
}

/* ---------- small components ---------- */

function ToolGroup({ tools, gap, column, mini }) {
  const size = mini ? 26 : 34;
  return (
    <Group $gap={gap} $column={column}>
      {tools.map(t => {
        const [name, flags = ''] = t.split(':');
        const own = mini && small[name];
        return (
          <Tool
            key={t}
            aria-label={name}
            $small={mini}
            $on={flags.includes('b')}
            $ring={flags.includes('y')}
            $record={flags.includes('r')}
            $more={flags.includes('m')}
          >
            <svg width={size} height={size} viewBox={own ? '0 0 26 26' : '0 0 34 34'} fill={own ? c.dark : 'none'}>
              {own || art[name]}
            </svg>
          </Tool>
        );
      })}
    </Group>
  );
}

function Burger({ color }) {
  return <BurgerButton aria-label="menu" $color={color} />;
}

function Field({ id, value, w, m, off, label }) {
  return (
    <FieldBox $w={w} $m={m} $off={off}>
      <input id={id} defaultValue={value} disabled={off} aria-label={label} />
      <Spin $off={off} width="8" height="12" viewBox="0 0 8 12" strokeWidth="1.200">
        <path d="M1 4l3-3 3 3M1 8l3 3 3-3" />
      </Spin>
    </FieldBox>
  );
}

function Select({ id, value, w, gap, off, label }) {
  return (
    <SelectBox $w={w} $gap={gap} $off={off}>
      <select id={id} defaultValue={value} disabled={off} aria-label={label}>
        <option>{value}</option>
      </select>
      <ChevronDown size={12} strokeWidth={3} />
    </SelectBox>
  );
}

function Menus({ items }) {
  return items.map(item => (
    <MenuItem key={item} $hot={item.startsWith('*')}>
      {item.replace('*', '')}
    </MenuItem>
  ));
}

const mographMenu = [
  ['blank', '效果器', 'sub'],
  null,
  ['cloner', '克隆'],
  ['matrix', '矩阵'],
  ['fracture', '分裂'],
  ['voronoi', '破碎（Voronoi）'],
  ['instance', '实例'],
  ['text', '文本'],
  ['tracer', '追踪对象'],
  ['spline', '运动样条', 'active'],
  null,
  ['moextrude', '运动挤压'],
  ['polyfx', '多边形FX'],
  null,
  ['hide', '隐藏选择', 'off'],
  ['swap', '切换克隆/矩阵'],
  null,
  ['moselect', '运动图形选集'],
  ['weight', 'MoGraph权重绘制画笔'],
  null,
  ['linear', '线形克隆工具'],
  ['radial', '放射克隆工具'],
  ['grid', '网格克隆工具'],
];

function MographPopup() {
  return (
    <Popup>
      <PopupGrip />
      {mographMenu.map((row, i) => {
        if (!row) return <PopupRule key={i} />;
        const [icon, text, state] = row;
        return (
          <PopupItem key={i} $active={state === 'active'} $off={state === 'off'}>
            <PopupIcon $active={state === 'active'}>
              <svg width="21" height="22" viewBox="0 0 21 22">
                {menuArt[icon]}
              </svg>
            </PopupIcon>
            <PopupText>{text}</PopupText>
            {state === 'sub' && (
              <svg width="12" height="8" viewBox="0 0 12 8">
                <path d="M3 0v8l4-4z" fill="#d8d8d8" />
              </svg>
            )}
          </PopupItem>
        );
      })}
    </Popup>
  );
}

function TopMenu() {
  return (
    <MenuBar>
      <Menus items={['文件', '*编辑', '*创建', '*模式', '选择', '工具', '*网格', '样条', '体积']} />
      <MenuSlot>
        <MenuItem $open>运动图形</MenuItem>
        <MographPopup />
      </MenuSlot>
      <Menus items={['*角色', '*动画', '模拟', '跟踪器', '渲染', '*扩展', '*窗口', '帮助']} />
      <Spacer />
      <BarLabel htmlFor="space">节点空间：</BarLabel>
      <Select id="space" value="当前 (标准/物理)" w={114} gap={6} />
      <BarLabel htmlFor="layout" $gap={26}>界面:</BarLabel>
      <Select id="layout" value="启动" w={128} gap={6} />
      <BarLabel as="span" $gap={6}>
        <svg width="14" height="16" viewBox="0 0 14 16" fill="none" stroke="#8f8f8f" strokeWidth="1.200">
          {lineArt.search}
        </svg>
      </BarLabel>
    </MenuBar>
  );
}

function TransportRow() {
  return (
    <Transport>
      <ToolGroup mini gap={12} tools={['first']} />
      <ToolGroup mini gap={12} tools={['prevKey', 'prev', 'play', 'next', 'nextKey']} />
      <ToolGroup mini gap={12} tools={['last']} />
      <ToolGroup mini gap={12} tools={['key:ym', 'record:r']} />
      <ToolGroup mini gap={12} tools={['gear']} />
      <ToolGroup mini gap={4} tools={['move:b', 'scale:b', 'rotate:b', 'param:b', 'pla']} />
      <ToolGroup mini gap={12} tools={['sound:b', 'film:bm']} />
    </Transport>
  );
}

function Timeline() {
  const labels = Array.from({ length: 19 }, (_, i) => i * 5);
  const ticks = Array.from({ length: 91 }, (_, i) => i);
  return (
    <>
      <TimeRow $h={28}>
        <Grip $w={5} $h={18} $m="6px 0 0" />
        <Ruler>
          <RulerLabels>
            {labels.map(n => (
              <span key={n}>{n}</span>
            ))}
          </RulerLabels>
          <RulerTicks>
            {ticks.map(n => (
              <Tick key={n} $mid={n % 5 === 0} $tall={n > 0 && n % 30 === 0} />
            ))}
          </RulerTicks>
          <Playhead />
        </Ruler>
        <Field value="0 F" w={76} m="5px 0 0" label="当前帧" />
      </TimeRow>
      <TimeRow $h={32}>
        <Grip $w={5} $h={20} $m="6px 2px 0 0" />
        <Field value="0 F" w={76} m="6px 0 0" label="起始帧" />
        <RangeBar>
          <span>0 F</span>
          <span>90 F</span>
        </RangeBar>
        <Field value="90 F" w={76} m="6px 0 0" label="结束帧" />
        <TransportRow />
      </TimeRow>
    </>
  );
}

function CoordPanel() {
  const rows = [
    ['X', 'X', 'H'],
    ['Y', 'Y', 'P'],
    ['Z', 'Z', 'B'],
  ];
  return (
    <Coords>
      <PanelBar $h={24} $line>
        <Burger />
        <CoordHeads>
          <span>--</span>
          <span>--</span>
          <span>--</span>
        </CoordHeads>
      </PanelBar>
      <CoordGrid>
        {rows.map(r =>
          r.map((name, i) => (
            <React.Fragment key={name + i}>
              <label htmlFor={`coord-${name}-${i}`}>{name}</label>
              <Field id={`coord-${name}-${i}`} value={i === 2 ? '0 °' : '0 cm'} off />
            </React.Fragment>
          ))
        )}
      </CoordGrid>
      <CoordFoot>
        <Select value="世界坐标" off label="坐标系" />
        <Select value="缩放比例" off label="尺寸模式" />
        <PushButton>应用</PushButton>
      </CoordFoot>
    </Coords>
  );
}

function ObjectManager() {
  return (
    <Dock $h={459}>
      <DockPanel>
        <PanelBar $h={24} $right={2} $lift={1} $line>
          <Burger />
          <Menus items={['文件', '编辑', '查看', '对象', '*标签', '书签']} />
          <Spacer />
          <BarIcons $gap={4}>
            <LineIcon name="search" />
            <LineIcon name="home" />
            <LineIcon name="filter" />
            <LineIcon name="plus" />
          </BarIcons>
        </PanelBar>
        <ObjectArea />
      </DockPanel>
      <DockTabs>
        <DockTab $on>对象</DockTab>
        <DockTab>场次</DockTab>
        <DockTab>内容浏览器</DockTab>
      </DockTabs>
    </Dock>
  );
}

function NumberPairs({ rows }) {
  return rows.map(([a, av, b, bv]) => (
    <Row key={a} $h={22}>
      <Pair>
        <Caption htmlFor={a}>{a}</Caption>
        <Field id={a} value={av} w={76} />
      </Pair>
      <Caption htmlFor={b} $w={106}>{b}</Caption>
      <Field id={b} value={bv} w={76} />
    </Row>
  ));
}

function CheckPairs({ rows }) {
  return rows.map(([a, b]) => (
    <Row key={a}>
      <Pair>
        <Caption htmlFor={a}>{a}</Caption>
        <Check id={a} defaultChecked />
      </Pair>
      {b && <Caption htmlFor={b} $w={106}>{b}</Caption>}
      {b && <Check id={b} defaultChecked />}
    </Row>
  ));
}

function Attributes() {
  return (
    <Dock $grow>
      <DockPanel>
        <PanelBar $h={23} $right={2} $lift={1} $line>
          <Burger />
          <Menus items={['模式', '编辑', '用户数据']} />
          <Spacer />
          <BarIcons $gap={4}>
            <LineIcon name="back" color="#585858" />
            <LineIcon name="forward" color="#585858" />
            <LineIcon name="up" color="#585858" />
            <LineIcon name="search" />
            <LineIcon name="filter" />
            <LineIcon name="lock" />
            <LineIcon name="target" />
            <LineIcon name="plus" />
          </BarIcons>
        </PanelBar>
        <ObjectTitle>
          <svg width="18" height="20" viewBox="0 0 18 20">
            <path d="M1 1h8l4 4v14H1z" fill={c.white} stroke={c.dark} strokeWidth=".6" />
            <path d="M9 1l4 4H9z" fill="#e86435" />
            <Gear x={11} y={13} r={5} color="#e86435" />
            <circle cx="11" cy="13" r="1" fill={c.white} />
          </svg>
          <span>工程</span>
        </ObjectTitle>
        <TabRow>
          <Tab $on>工程设置</Tab>
          <Tab>Cineware</Tab>
          <Tab>信息</Tab>
          <Tab>动力学</Tab>
          <Tab>参考</Tab>
          <Tab>待办事项</Tab>
          <Tab>帧插值</Tab>
          <Tab $hot>场景节点</Tab>
        </TabRow>
        <SectionTitle>工程设置</SectionTitle>
        <Section $flush>
          <Row $h={22}>
            <Caption htmlFor="scale">工程缩放</Caption>
            <Field id="scale" value="1" w={76} />
            <Select value="厘米" w={53} gap={5} label="单位" />
          </Row>
          <Row $h={22} $outer>
            <PushButton $w={184}>缩放工程...</PushButton>
          </Row>
        </Section>
        <Section>
          <NumberPairs
            rows={[
              ['帧率', '30', '工程时长', '0 F'],
              ['最小时长', '0 F', '最大时长', '90 F'],
              ['预览最小时长', '0 F', '预览最大时长', '90 F'],
            ]}
          />
        </Section>
        <Section>
          <Row $h={22}>
            <Pair>
              <Caption htmlFor="lod">细节级别</Caption>
              <Field id="lod" value="100 %" w={76} />
            </Pair>
            <PlainCaption htmlFor="render-lod">编辑使用渲染细节级别</PlainCaption>
            <Check id="render-lod" />
          </Row>
        </Section>
        <Section>
          <CheckPairs rows={[['使用动画', '使用表达式'], ['使用生成器', '使用变形器'], ['使用运动剪辑系统']]} />
        </Section>
        <Section>
          <Row>
            <Caption htmlFor="default-color">默认对象颜色</Caption>
            <Select id="default-color" value="60% 灰色" w={79} />
          </Row>
          <Row>
            <Caption htmlFor="color" $w={78}>颜色</Caption>
            <Fold $inner />
            <Swatch id="color" aria-label="颜色" />
            <BarLabel as="span" $gap={8}>
              <Pipette size={17} color="#9a9a9a" />
            </BarLabel>
          </Row>
        </Section>
        <Section>
          <Row>
            <Fold />
            <Caption htmlFor="clip">视图修剪</Caption>
            <Select id="clip" value="中" w={79} />
          </Row>
        </Section>
        <Section>
          <CheckPairs rows={[['线性工作流程']]} />
          <Row>
            <Fold />
            <Caption htmlFor="profile">输入色彩特性</Caption>
            <Select id="profile" value="sRGB" w={79} />
          </Row>
        </Section>
        <Section>
          <Row>
            <PlainCaption htmlFor="node-color">为节点材质使用颜色通道</PlainCaption>
            <Check id="node-color" />
          </Row>
        </Section>
        <Section>
          <TwoButtons>
            <PushButton $w={74}>载入预设...</PushButton>
            <PushButton $w={74}>保存预设...</PushButton>
          </TwoButtons>
        </Section>
      </DockPanel>
      <DockTabs>
        <DockTab $on>属性</DockTab>
        <DockTab>层</DockTab>
        <DockTab>构造</DockTab>
      </DockTabs>
    </Dock>
  );
}

export default function App() {
  return (
    <Shell>
      <GlobalStyle />
      <TopMenu />
      <Main>
        <Workspace>
          <ToolStrip>
            <Grip $w={5} $h={30} $m="2px 0 0" />
            <ToolGroup gap={3} tools={['undo', 'redo']} />
            <ToolGroup gap={12} tools={['select:m', 'move:b', 'scale', 'rotate']} />
            <ToolGroup gap={4} tools={['psr']} />
            <ToolGroup gap={4} tools={['move:m']} />
            <ToolGroup gap={12} tools={['axisX:b', 'axisX:b2', 'axisX:b3']} />
            <ToolGroup gap={4} tools={['world']} />
            <ToolGroup gap={10} tools={['clap', 'clapPlay:m', 'clapGear']} />
            <ToolGroup
              gap={12}
              tools={['cube:m', 'pen:m', 'subdiv:ym', 'extrude:m', 'cloner:m', 'fracture:m', 'spread:m', 'bend:ym']}
            />
            <ToolGroup gap={4} tools={['floor:m', 'camera:m', 'light:m']} />
          </ToolStrip>
          <WorkBody>
            <ToolColumn>
              <Grip $w={29} $h={5} $m="0 0 0 3px" />
              <ToolGroup column gap={3} tools={['makeEdit:m']} />
              <ToolGroup column gap={12} tools={['model:bm', 'texture']} />
              <ToolGroup column gap={4} tools={['points', 'edges', 'faces']} />
              <ToolGroup column gap={4} tools={['uv']} />
              <ToolGroup column gap={4} tools={['axis']} />
              <ToolGroup column gap={12} tools={['snapGrey:b', 'snapOrange:m', 'snapWhite']} />
              <ToolGroup column gap={12} tools={['magnet:ym']} />
              <ToolGroup column gap={12} tools={['netOrange', 'netLock:bm', 'netRotate:m']} />
            </ToolColumn>
            <Center>
              <ViewPanel>
                <PanelBar $right={2} $lift={1}>
                  <Burger color="#d0d0d0" />
                  <Menus items={['*查看', '摄像机', '显示', '*选项', '过滤', '面板']} />
                  <Spacer />
                  <BarIcons $gap={5}>
                    <LineIcon name="pan" size={15} />
                    <LineIcon name="dolly" size={15} />
                    <LineIcon name="orbit" size={15} />
                    <LineIcon name="layout" size={15} />
                  </BarIcons>
                </PanelBar>
                <Scene>
                  <Floor />
                  <TagLeft>透视视图</TagLeft>
                  <TagCamera>
                    默认摄像机
                    <svg width="18" height="16" viewBox="2 5 30 26">
                      <Camera />
                    </svg>
                  </TagCamera>
                  <TagGrid>网格间距 : 50 cm</TagGrid>
                </Scene>
              </ViewPanel>
              <Timeline />
              <BottomRow>
                <Materials>
                  <PanelBar $h={23} $line>
                    <Burger />
                    <Menus items={['创建', '编辑', '查看', '选择', '材质', '纹理']} />
                  </PanelBar>
                </Materials>
                <CoordPanel />
              </BottomRow>
            </Center>
          </WorkBody>
        </Workspace>
        <Sidebar>
          <ObjectManager />
          <DockGap />
          <Attributes />
        </Sidebar>
      </Main>
      <Gadget />
    </Shell>
  );
}
